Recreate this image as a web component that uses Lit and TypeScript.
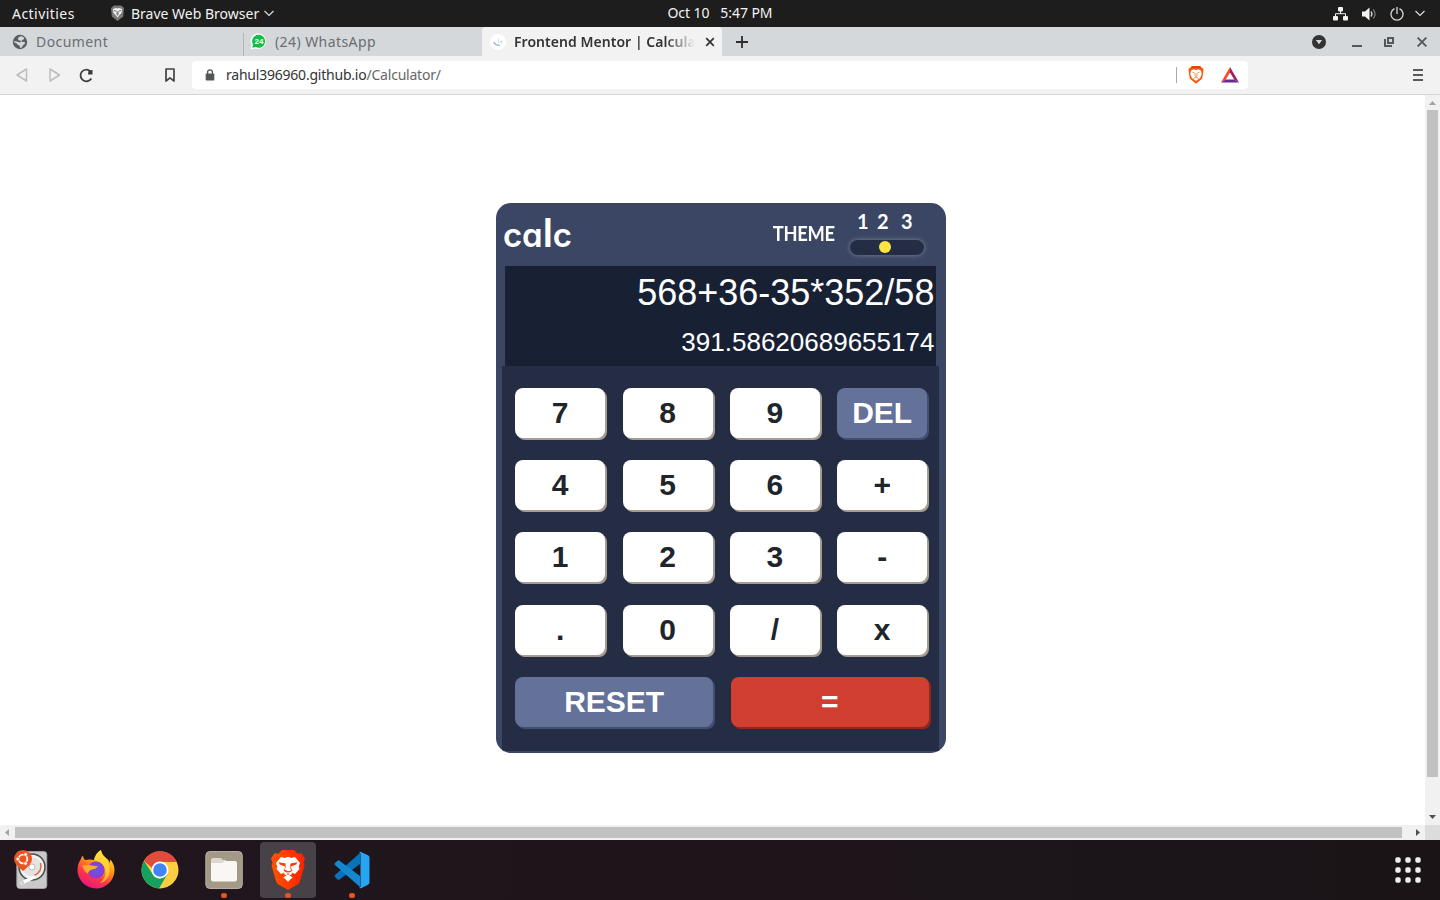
import { LitElement, html, css, svg } from "lit";
import { customElement, property, state } from "lit/decorators.js";
import { classMap } from "lit/directives/class-map.js";

const lionFace = svg`<path fill="#fff" d="M13 7l3.500 1L20 6.800 23.500 8 27 7l5 6-1.300 3.800.8 2.200-4.500 5-3.500-1.500.5 1.500-4 2.500-4-2.500.5-1.500L13 24l-4.500-5 .8-2.200L8 13z"/><path fill="#fff" d="M15.300 27.300L20 24.800l4.700 2.500L20 31.800z"/><path d="M10.500 12.200l7 1.200-.5 3.200-5.200-2.200zM29.500 12.200l-7 1.200.5 3.200 5.200-2.200zM17.200 14l-.4 4.500-1.300 2.200 4.500 2.600 4.500-2.600-1.300-2.200-.4-4.500-.6.2.3 4.800 1 1.400L20 21.300l-3.500-1.900 1-1.400.3-4.800zM19.400 22h1.200v3h-1.200z"/>`;

@customElement("system-bar")
class SystemBar extends LitElement {
  static styles = css`
    :host { display: flex; height: 27px; box-sizing: border-box; background: #1d1d1d; color: #f2f2f2; font: 14px/27px "Noto Sans", sans-serif; justify-content: space-between; white-space: pre; }
    .side { display: flex; align-items: center; width: 420px; }
    .activities { width: 98px; padding-left: 12px; letter-spacing: 0.45px; }
    .app { margin-left: 6px; letter-spacing: 0; }
    .clock { font-size: 14px; letter-spacing: -0.05px; line-height: 26px; }
    .right { justify-content: flex-end; padding-right: 15px; box-sizing: border-box; }
    svg { display: block; flex: none; }
    .net { margin-right: 14px; }
    .vol { margin-right: 13px; }
    .pow { margin-right: 11px; }
    .caret { margin-left: 5px; }
  `;
  render() {
    return html`
      <div class="side">
        <span class="activities">Activities</span>
        <svg width="15" height="17" viewBox="0 0 15 17"><path fill="#77797a" d="M4 .5h7L14 3l-.8 8.500L7.500 16 1.800 11.500 1 3z"/><path fill="#f4f4f4" d="M3 4l3-1 1.500.5L9 3l3 1-.5 4L9.500 10l-2 2.500-2-2.500-2-2z"/><path fill="none" stroke="#555" stroke-width=".9" d="M4 5.500l2.500.8M11 5.500l-2.500.8M7 6.500v3l.5.8.5-.8v-3"/></svg>
        <span class="app">Brave Web Browser</span>
        <svg class="caret" width="10" height="7" viewBox="0 0 10 7"><path fill="none" stroke="#ddd" stroke-width="1.200" d="M.5 1l4.500 4.500L9.500 1"/></svg>
      </div>
      <span class="clock">Oct 10   5:47 PM</span>
      <div class="side right">
        <svg class="net" width="15" height="14" viewBox="0 0 15 14"><g fill="#f2f2f2"><rect x="5" y="0" width="5" height="4.500" rx="1"/><rect x="0" y="9" width="5" height="4.500" rx="1"/><rect x="10" y="9" width="5" height="4.500" rx="1"/></g><path d="M7.500 4v3M2.500 9V6.700h10V9" fill="none" stroke="#f2f2f2"/></svg>
        <svg class="vol" width="15" height="14" viewBox="0 0 15 14"><path fill="#f2f2f2" d="M0 4.500h3L7.500.5v13L3 9.500H0z"/><path fill="none" stroke="#d6d6d6" stroke-width="1.300" d="M9 4.500q2 2.500 0 5"/><path fill="none" stroke="#777" stroke-width="1.300" d="M11.300 2.500q3.600 4.500 0 9"/></svg>
        <svg class="pow" width="14" height="14" viewBox="0 0 14 14"><path fill="none" stroke="#d8d8d8" stroke-width="1.300" d="M4.500 1.700a6 6 0 1 0 5 0M7 0v7"/></svg>
        <svg width="10" height="7" viewBox="0 0 10 7"><path fill="none" stroke="#ddd" stroke-width="1.200" d="M.5 1l4.500 4.500L9.500 1"/></svg>
      </div>`;
  }
}

@customElement("tab-strip")
class TabStrip extends LitElement {
  static styles = css`
    :host { display: flex; height: 29px; background: #d4d8db; color: #6b6d6f; font: 14px/29px "Noto Sans", sans-serif; }
    .tab { display: flex; align-items: center; width: 240px; box-sizing: border-box; white-space: nowrap; }
    .doc { padding-left: 12px; width: 243px; }
    .wa { padding-left: 6px; width: 239px; border-left: 1px solid #b6b9bb; border-image: linear-gradient(transparent 24%, #b3b6b8 24%) 1; }
    .active { background: #f2f2f2; border-radius: 4px 4px 0 0; color: #333; font-weight: 600; padding-left: 8px; }
    .label { margin-left: 8px; letter-spacing: 0.42px; }
    .title { width: 181px; margin-left: 8px; overflow: hidden; -webkit-mask-image: linear-gradient(90deg, #000 84%, transparent); mask-image: linear-gradient(90deg, #000 84%, transparent); letter-spacing: 0.04px; }
    .close { margin-left: 10px; }
    .plus { margin: 9px 0 0 14px; }
    .controls { display: flex; align-items: center; margin-left: auto; padding-right: 13px; }
    .min { margin-left: 26px; }
    .max { margin-left: 22px; }
    .quit { margin-left: 23px; }
    svg { display: block; flex: none; }
  `;
  render() {
    return html`
      <div class="tab doc">
        <svg width="16" height="16" viewBox="0 0 16 16"><circle cx="8" cy="8" r="7.200" fill="#595d61"/><path fill="#d4d8db" d="M9.500 2.300Q6 2.800 6 5q0 1.300 1.500 1.500 1.500 0 1.800.8.200 1-1.200 1Q6.500 8.500 5 7.500L2 7.300v1.200q1.500 0 2.800 1 .3 1.800 2.200 1.800 1 .2.800 1.300-.1.900.7 1.400 1.500-.2 2-1.800.2-1.200 1.500-1.700 1.200-.5 1-2-.7-1-2-.5-1.300.2-1.300-1 0-1 1.300-1.300 1.300-.3 1.200-1.700-1-1.200-2.700-1.700z"/></svg>
        <span class="label">Document</span>
      </div>
      <div class="tab wa">
        <svg width="17" height="17" viewBox="0 0 17 17"><path fill="#fff" d="M9 .5a7.700 7.700 0 1 1-3.500 14.900L.8 16.300 1.600 12A7.700 7.700 0 0 1 9 .5z"/><path fill="#12bf45" d="M9 1.800a6.500 6.500 0 1 1-3.300 12.300L2.300 14.800 3 11.500A6.500 6.500 0 0 1 9 1.800z"/><text x="9" y="11.300" text-anchor="middle" font-family="Liberation Sans" font-weight="700" font-size="8" fill="#fff">24</text></svg>
        <span class="label">(24) WhatsApp</span>
      </div>
      <div class="tab active">
        <svg width="16" height="16" viewBox="0 0 16 16"><circle cx="8" cy="8" r="8" fill="#fff"/><path d="M3.800 8q1.200 3.400 6 3.300" fill="none" stroke="#aab2da" stroke-width="1.500"/><path d="M8.500 4.500v4.500M11.500 6.500v3l-1.200-1.500z" fill="#b4e4e6" stroke="#b4e4e8" stroke-width=".9"/></svg>
        <span class="title">Frontend Mentor | Calculator</span>
        <svg class="close" width="10" height="10" viewBox="0 0 10 10"><path stroke="#333" stroke-width="1.700" d="M1.200 1.200l7.600 7.600M8.800 1.200L1.200 8.800"/></svg>
      </div>
      <svg class="plus" width="12" height="12" viewBox="0 0 12 12"><path stroke="#2d2d2d" stroke-width="1.800" d="M6 0v12M0 6h12"/></svg>
      <div class="controls">
        <svg width="14" height="14" viewBox="0 0 14 14"><circle cx="7" cy="7" r="7" fill="#333"/><path fill="#d4d8db" d="M3.800 5h6.400L7 9.300z"/></svg>
        <svg class="min" width="10" height="10" viewBox="0 0 10 10"><path fill="#55585a" d="M0 8h10v2H0z"/></svg>
        <svg class="max" width="10" height="10" viewBox="0 0 10 10"><path fill="none" stroke="#55585a" stroke-width="2" d="M4 1h5v5H4zM1 2v7h7"/></svg>
        <svg class="quit" width="10" height="10" viewBox="0 0 10 10"><path stroke="#55585a" stroke-width="1.900" d="M.6.6l8.800 8.800M9.400.6L.6 9.400"/></svg>
      </div>`;
  }
}

@customElement("address-bar")
class AddressBar extends LitElement {
  static styles = css`
    :host { display: flex; align-items: center; height: 39px; box-sizing: border-box; background: #f2f2f2; border-bottom: 1px solid #d5d5d5; padding: 0 17px 0 15px; }
    svg { display: block; flex: none; }
    .nav { display: flex; align-items: center; width: 177px; box-sizing: border-box; }
    .fwd { margin-left: 20px; }
    .reload { margin-left: 18px; }
    .mark { margin-left: 71px; }
    .field { display: flex; align-items: center; width: 1056px; height: 28px; box-sizing: border-box; background: #fff; border-radius: 4px; padding: 0 9px 0 13px; font: 14px/28px "Noto Sans", sans-serif; color: #666; }
    .url { margin-left: 11px; letter-spacing: -0.22px; }
    .host { color: #333; }
    .rule { width: 1px; height: 16px; background: #aaa; margin-left: auto; }
    .shield { margin-left: 11px; }
    .bat { margin-left: 17px; }
    .menu { margin-left: auto; }
  `;
  render() {
    return html`
      <div class="nav">
        <svg width="14" height="14" viewBox="0 0 14 14"><path fill="none" stroke="#bdbdbd" stroke-width="1.500" stroke-linejoin="round" d="M11.500 1v12L2 7z"/></svg>
        <svg class="fwd" width="12" height="14" viewBox="0 0 12 14"><path fill="none" stroke="#bdbdbd" stroke-width="1.500" stroke-linejoin="round" d="M1 1v12l9.500-6z"/></svg>
        <svg class="reload" width="15" height="15" viewBox="0 0 15 15"><path fill="none" stroke="#3a3a3a" stroke-width="1.700" d="M12.300 10.500A5.800 5.800 0 1 1 11 3"/><path fill="#3a3a3a" d="M9.500 2.500L13.500 2v4.500H9z"/></svg>
        <svg class="mark" width="10" height="14" viewBox="0 0 10 14"><path fill="none" stroke="#444" stroke-width="1.700" stroke-linejoin="round" d="M1 1h8v12L5 9.800 1 13z"/></svg>
      </div>
      <div class="field">
        <svg width="10" height="12" viewBox="0 0 10 12"><path fill="#53565a" d="M1.500 4.500h7q.8 0 .8.800v5.400q0 .8-.8.800h-7q-.8 0-.8-.8V5.300q0-.8.8-.8z"/><path fill="none" stroke="#53565a" stroke-width="1.300" d="M2.600 5V3.200a2.400 2.400 0 0 1 4.800 0V5"/></svg>
        <span class="url"><span class="host">rahul396960.github.io</span>/Calculator/</span>
        <div class="rule"></div>
        <svg class="shield" width="16" height="18" viewBox="0 0 16 18"><path fill="#fb5404" d="M4 0h8l1.500 1.500L15.500 3l-.3 3-1 6.500L8 17.800 1.800 12.500.8 6 .5 3l2-1.500z"/><path fill="#d94a0a" d="M4 0h8l1.200 2H2.800z"/><path fill="#fff" d="M3 4.500l2.500-1.200L8 4l2.500-.7L13 4.500l.7 3.500-1.500 4L8 15l-4.200-3L2.300 8z"/><path fill="none" stroke="#fb7a3c" stroke-width=".8" d="M4.500 6.200l2 .6M11.500 6.200l-2 .6M7 7v3l1 .6 1-.6V7M5.500 12.500L8 11l2.500 1.500"/></svg>
        <svg class="bat" width="18" height="16" viewBox="0 0 18 16"><path fill="#ff4724" d="M9 0v5.500L4.800 12.500 0 15.500z"/><path fill="#9e1f63" d="M9 0v5.500l4.200 7 4.800 3z"/><path fill="#662d91" d="M0 15.500l4.800-3h8.400l4.800 3z"/></svg>
      </div>
      <svg class="menu" width="10" height="12" viewBox="0 0 10 12"><path fill="#5b5b5b" d="M0 0h10v2H0zM0 5h10v2H0zM0 10h10v2H0z"/></svg>`;
  }
}

@customElement("calc-app")
class CalcApp extends LitElement {
  @property() expression = "568+36-35*352/58";
  @property() result = "391.58620689655174";
  @state() private keys = ["7", "8", "9", "DEL", "4", "5", "6", "+", "1", "2", "3", "-", ".", "0", "/", "x"];

  static styles = css`
    :host { display: flex; flex-direction: column; width: 450px; height: 550px; border-radius: 15px; overflow: hidden; background: #3a4663; color: #fff; font-family: "Liberation Sans", sans-serif; }
    header { display: flex; height: 63px; flex: none; box-sizing: border-box; padding: 0 22px 0 7px; font-family: Lato, sans-serif; font-weight: 700; }
    .logo { font: 600 33px/63px Inter, sans-serif; font-feature-settings: "cv11"; letter-spacing: -0.1px; padding-top: 1px; height: 62px; }
    .tall { font-size: 39px; line-height: 1px; }
    .theme { margin-left: auto; font-size: 20px; line-height: 61px; font-weight: 700; letter-spacing: -0.3px; transform: scaleX(0.915); transform-origin: right; }
    .picker { width: 74px; margin-left: 15px; }
    .numbers { display: grid; grid-template-columns: 20px 24px 14px; padding-left: 7px; height: 37px; font-size: 20px; line-height: 37px; }
    .toggle { display: flex; box-sizing: border-box; height: 15px; border-radius: 8px; background: #242d44; box-shadow: 0 0 5px rgba(255, 255, 255, 0.35); padding: 1px 0 0 29px; }
    .dot { width: 12px; height: 12px; border-radius: 50%; background: #ffe53d; }
    .display { height: 100px; flex: none; margin: 0 10px 0 9px; padding-right: 1.6px; background: #182034; text-align: right; }
    .expression { font-size: 36px; line-height: 53px; }
    .result { font-size: 26px; line-height: 46px; }
    .pad { height: 385px; box-sizing: border-box; margin: 0 7px 0 6px; padding: 22px 0 0 13.2px; background: #242d44; display: flex; flex-direction: column; gap: 22.2px; }
    .grid { display: grid; grid-template-columns: repeat(4, 90px); gap: 22.2px 17.33px; }
    .wide { display: flex; gap: 18px; }
    button { height: 50px; border: 0; padding: 0; border-radius: 8px; background: #fff; color: #1e252b; box-shadow: 2px 2px 0 #a69d90; font: 700 30px/50px "Liberation Sans", sans-serif; }
    button.soft { background: #647198; color: #fff; box-shadow: 2px 2px 0 #414e73; }
    .wide button { width: 198px; }
    .wide .equals { background: #d03f2f; color: #fff; box-shadow: 2px 2px 0 #93261a; padding-right: 1px; }
  `;
  render() {
    return html`
      <header>
        <span class="logo">ca<span class="tall">l</span>c</span>
        <span class="theme">THEME</span>
        <div class="picker">
          <div class="numbers"><span>1</span><span>2</span><span>3</span></div>
          <div class="toggle"><div class="dot"></div></div>
        </div>
      </header>
      <div class="display">
        <div class="expression">${this.expression}</div>
        <div class="result">${this.result}</div>
      </div>
      <div class="pad">
        <div class="grid">${this.keys.map((k) => html`<button class=${classMap({ soft: k === "DEL" })}>${k}</button>`)}</div>
        <div class="wide"><button class="soft">RESET</button><button class="equals">=</button></div>
      </div>`;
  }
}

@customElement("app-dock")
class AppDock extends LitElement {
  static styles = css`
    :host { display: flex; height: 60px; background: linear-gradient(90deg, #21161e, #1a1417); }
    .item { display: flex; flex-direction: column; align-items: center; width: 56px; height: 56px; box-sizing: border-box; margin: 2px 4px; padding-top: 8px; border-radius: 4px; }
    .current { background: #494148; }
    .run { width: 5.4px; height: 5.4px; border-radius: 50%; background: #e95420; margin-top: 2.5px; flex: none; }
    svg { display: block; flex: none; }
    .grid { margin-left: auto; }
  `;
  render() {
    return html`
      <div class="item">
        <svg width="40" height="40" viewBox="0 0 40 40"><rect x="4.800" y="1.500" width="30" height="37" rx="3" fill="#c9c9c9" stroke="#aaa" stroke-width=".8"/><circle cx="20" cy="17" r="13" fill="#f1f1f1" stroke="#4d4d4d" stroke-width="1.600"/><circle cx="20" cy="17" r="9.500" fill="#e3e3e3"/><path d="M28.500 13q2.500 9-7 13" stroke="#e46a42" stroke-width="1.500" fill="none"/><circle cx="20" cy="17" r="3" fill="#fff" stroke="#bbb"/><path d="M10 33L22 27" stroke="#fff" stroke-width="3.200" stroke-linecap="round"/><circle cx="10.500" cy="32.700" r="1.600" fill="#ccc"/><path fill="#e95420" d="M11 0a9 9 0 0 1 9 9q0 5-9 12Q2 14 2 9a9 9 0 0 1 9-9z"/><circle cx="11" cy="9" r="4.300" fill="none" stroke="#fff" stroke-width="1.800"/><g fill="#fff" stroke="#e95420" stroke-width=".8"><circle cx="5.800" cy="9" r="1.900"/><circle cx="13.600" cy="4.500" r="1.900"/><circle cx="13.600" cy="13.500" r="1.900"/></g></svg>
      </div>
      <div class="item">
        <svg width="40" height="40" viewBox="0 0 40 40"><defs><linearGradient id="ff" x1=".8" y1="0" x2=".3" y2="1"><stop offset="0" stop-color="#fff14a"/><stop offset=".4" stop-color="#ff980e"/><stop offset=".7" stop-color="#ff3647"/><stop offset="1" stop-color="#e31587"/></linearGradient><radialGradient id="fp"><stop offset="0" stop-color="#5b5fe0"/><stop offset="1" stop-color="#9138d8"/></radialGradient></defs><path fill="url(#ff)" d="M4.500 10q.5-3 2.500-4.500 0 2.500 2 4.500 5-1 9 0 1.500-7 7-10 .5 4 4.500 7.500 3 1.500 4 5.500l1-3.500q4 5 4 11A18.500 18.500 0 0 1 20 38.500 18.500 18.500 0 0 1 1.500 20Q1.500 14 4.500 10z"/><path fill="#ffe23c" d="M18 10q1.500-7 7-10 .5 4.500 4.500 8 6 8 3.500 17-3 7-9 8 7-6 5-14-1.500-5-6-7-2-1-5-2z" opacity=".7"/><circle cx="20" cy="20" r="8.500" fill="url(#fp)"/><path fill="#ffac26" d="M6.500 15.500q5-1 10 0 3 1 5.500.5-1.500 3-6 3.500-3 .5-4 4-4.500-2-5.500-8z"/></svg>
      </div>
      <div class="item">
        <svg width="40" height="40" viewBox="0 0 40 40"><circle cx="20" cy="20" r="18.500" fill="#ffcd42"/><path fill="#de4c3c" d="M3.980 10.750A18.500 18.500 0 0 1 37 12H20a8.500 8.500 0 0 0-8 6z"/><path fill="#16a160" d="M3.980 10.750A18.500 18.500 0 0 0 19 38.450L27.500 24 20 28.500a8.500 8.500 0 0 1-7.500-4.500z"/><circle cx="20" cy="20" r="8.500" fill="#fff"/><circle cx="20" cy="20" r="6.800" fill="#4285f4"/></svg>
      </div>
      <div class="item">
        <svg width="40" height="40" viewBox="0 0 40 40"><rect x="1.800" y="1.500" width="36.500" height="37" rx="4" fill="#a29a86" stroke="#c0b9a8" stroke-width=".9"/><path fill="#dcd8cd" d="M7 12V10q0-2 2-2h7q2 0 3 2h3v4H7z"/><path fill="#f8f7f4" d="M7 13h11l3-2h10q2 0 2 2v16.500q0 2-2 2H9q-2 0-2-2z"/></svg>
        <div class="run"></div>
      </div>
      <div class="item current">
        <svg width="40" height="40" viewBox="0 0 40 40"><defs><linearGradient id="br"><stop offset="0" stop-color="#ff5500"/><stop offset="1" stop-color="#ff2000"/></linearGradient></defs><g fill="url(#br)"><path d="M14 0h12l3.500 3.500 4-.3L37 8.500l-1.500 4 1 3L32 31q-.5 2-2.500 3.500L20 40l-9.500-5.500Q8.500 33 8 31L3.500 15.500l1-3L3 8.500l3.500-5.300 4 .3z"/></g><g fill="#ff3b00">${lionFace}</g></svg>
        <div class="run"></div>
      </div>
      <div class="item">
        <svg width="40" height="40" viewBox="0 0 40 40"><path fill="#0873b8" d="M28 3v11L7.500 29.500q-1 .8-2 0L3 27q-1-1 0-2z"/><path fill="#1388d1" d="M3 15q-1-1 0-2l2.500-2.300q1-.8 2 0L28 26v11z"/><path fill="#27a4f2" d="M27 2.300q1-.8 2-.3l7 3.300q1.500.8 1.500 2.200v25q0 1.500-1.500 2.200l-7 3.500q-1 .4-2-.4 1.500.4 1.500-2V4.500q0-2.200-1.500-2.200z"/></svg>
        <div class="run"></div>
      </div>
      <div class="item grid">
        <svg width="40" height="40" viewBox="0 0 40 40"><g fill="#f0eeef">${[10, 20, 30].map((y) => [10, 20, 30].map((x) => svg`<rect x=${x - 2.7} y=${y - 2.7} width="5.400" height="5.400" rx="1.800"/>`))}</g></svg>
      </div>`;
  }
}

@customElement("app-root")
class AppRoot extends LitElement {
  static styles = css`
    :host { display: flex; flex-direction: column; width: 1440px; height: 900px; overflow: hidden; background: #fff; }
    .view { display: grid; grid-template: 730px 15px / 1425px 15px; height: 745px; }
    .page { display: flex; justify-content: center; padding: 108px 0 0 17px; box-sizing: border-box; }
    .bar { display: flex; background: #f1f1f1; align-items: center; }
    .vertical { flex-direction: column; }
    .vertical .thumb { width: 11px; height: 667px; }
    .horizontal .thumb { width: 1387px; height: 11px; }
    .thumb { background: #c1c1c1; }
    .corner { background: #dcdcdc; }
    svg { display: block; flex: none; }
    .end { margin-top: auto; }
    .far { margin-left: auto; }
  `;
  render() {
    return html`
      <system-bar></system-bar>
      <tab-strip></tab-strip>
      <address-bar></address-bar>
      <div class="view">
        <div class="page"><calc-app></calc-app></div>
        <div class="bar vertical">
          <svg width="15" height="15" viewBox="0 0 15 15"><path fill="#a3a3a3" d="M4 10h7L7.500 6z"/></svg>
          <div class="thumb"></div>
          <svg class="end" width="15" height="15" viewBox="0 0 15 15"><path fill="#505050" d="M4 5h7L7.500 9z"/></svg>
        </div>
        <div class="bar horizontal">
          <svg width="15" height="15" viewBox="0 0 15 15"><path fill="#a3a3a3" d="M9 4v7L5 7.500z"/></svg>
          <div class="thumb"></div>
          <svg class="far" width="15" height="15" viewBox="0 0 15 15"><path fill="#505050" d="M6 4v7l4-3.500z"/></svg>
        </div>
        <div class="corner"></div>
      </div>
      <app-dock></app-dock>`;
  }
}
